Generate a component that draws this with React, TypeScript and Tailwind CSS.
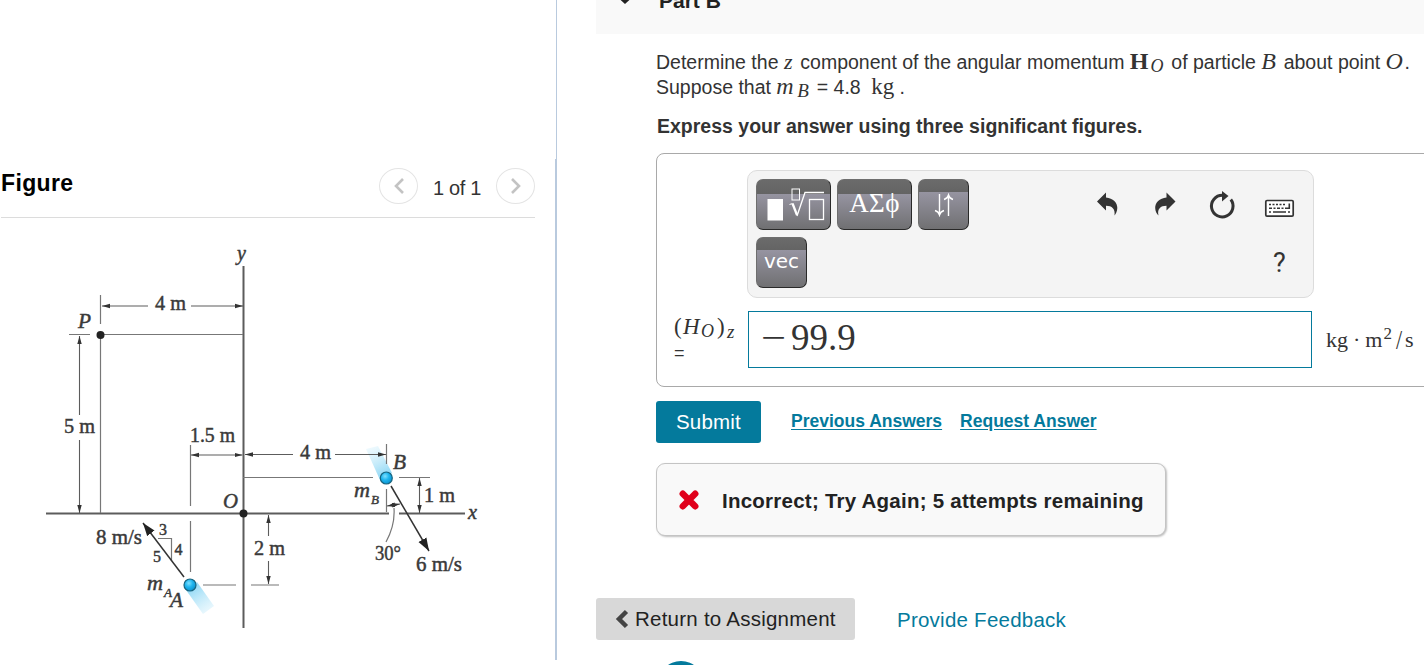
import type { ReactNode } from 'react'

const SERIF = "'Liberation Serif', serif"

type LabelProps = { x: number; y: number; w?: number; size?: number; italic?: boolean; children: string }

const Label = ({ x, y, w, size = 20, italic, children }: LabelProps) => (
  <text
    x={x}
    y={y}
    fontSize={size}
    fontStyle={italic ? 'italic' : 'normal'}
    textLength={w}
    lengthAdjust="spacingAndGlyphs"
    fill="#3a3a3a"
    stroke="#3a3a3a"
    strokeWidth={0.45}
  >
    {children}
  </text>
)

const Diagram = () => (
  <svg className="block h-[447px] w-[555px]" viewBox="0 218 555 447" fontFamily={SERIF}>
    <defs>
      <marker id="tip" viewBox="0 0 8 6" refX="8" refY="3" markerWidth="8" markerHeight="6" markerUnits="userSpaceOnUse" orient="auto-start-reverse">
        <path d="M0 0.8L8 3L0 5.2Z" fill="#333" />
      </marker>
      <marker id="bigTip" viewBox="0 0 13 10" refX="13" refY="5" markerWidth="13" markerHeight="10" markerUnits="userSpaceOnUse" orient="auto">
        <path d="M0 0.4L13 5L0 9.6Z" fill="#222" />
      </marker>
      <radialGradient id="ball" cx="40%" cy="35%" r="65%">
        <stop offset="0" stopColor="#7fe0ff" />
        <stop offset="0.5" stopColor="#1fb5ee" />
        <stop offset="1" stopColor="#0a93d0" />
      </radialGradient>
      <linearGradient id="trailA" gradientUnits="userSpaceOnUse" x1="190" y1="585" x2="210" y2="614">
        <stop offset="0.15" stopColor="#9bdcf6" />
        <stop offset="1" stopColor="#d5f1fc" stopOpacity="0.4" />
      </linearGradient>
      <linearGradient id="trailB" gradientUnits="userSpaceOnUse" x1="386" y1="478" x2="371" y2="447">
        <stop offset="0.15" stopColor="#9bdcf6" />
        <stop offset="1" stopColor="#d5f1fc" stopOpacity="0.4" />
      </linearGradient>
    </defs>

    {/* Motion trails */}
    <path d="M186 590L197 582L214 606L203 614Z" fill="url(#trailA)" />
    <path d="M380 480L392 473L378 446L366 449Z" fill="url(#trailB)" />

    {/* Axes */}
    <g stroke="#5c5c5c" strokeWidth="2">
      <path d="M243.5 266V628" />
      <path d="M46 513.5H389M399 513.5H465" />
    </g>

    {/* Reference lines */}
    <g stroke="#777" strokeWidth="1.2" fill="none">
      <path d="M100.5 295V324M69 334.5H90M100.5 334.5H243M100.5 334V513" />
      <path d="M243 477.5H373M399 477.5H430M386.500 444V464M386.500 489V512" />
      <path d="M190.500 445V506M190.500 521V572M203 585H236M251 585H279" />
      <path d="M158 538.5H171.500V561" />
      <path d="M394 508C395 522 391 533 386 542" />
    </g>

    {/* Dimension arrows */}
    <g stroke="#5c5c5c" strokeWidth="1.1">
      <path d="M148 306H102" markerEnd="url(#tip)" />
      <path d="M191 306H243" markerEnd="url(#tip)" />
      <path d="M79.500 415V336" markerEnd="url(#tip)" />
      <path d="M79.500 440V513" markerEnd="url(#tip)" />
      <path d="M191 455H242.500" markerStart="url(#tip)" markerEnd="url(#tip)" />
      <path d="M293 454.500H245" markerEnd="url(#tip)" />
      <path d="M335 454.500H386" markerEnd="url(#tip)" />
      <path d="M268.500 536V515" markerEnd="url(#tip)" />
      <path d="M268.500 561V584" markerEnd="url(#tip)" />
      <path d="M419.500 478V513" markerStart="url(#tip)" markerEnd="url(#tip)" />
      <path d="M387 506L400 504" markerStart="url(#tip)" markerEnd="url(#tip)" />
    </g>

    {/* Velocity vectors */}
    <g stroke="#333" strokeWidth="1.5">
      <path d="M184 577L143 523" markerEnd="url(#bigTip)" />
      <path d="M391 486L429 551" markerEnd="url(#bigTip)" />
    </g>

    {/* Points and particles */}
    <circle cx="100.500" cy="335" r="4" fill="#222" />
    <circle cx="243.500" cy="513.500" r="4" fill="#222" />
    <circle cx="190" cy="585" r="6" fill="url(#ball)" stroke="#17647f" strokeWidth="1.2" />
    <circle cx="386.300" cy="478" r="6" fill="url(#ball)" stroke="#17647f" strokeWidth="1.2" />

    <Label x={237} y={260} italic>y</Label>
    <Label x={155} y={310} w={31}>4 m</Label>
    <Label x={78} y={328} w={13} italic>P</Label>
    <Label x={64} y={433} w={31}>5 m</Label>
    <Label x={190} y={442} w={45}>1.5 m</Label>
    <Label x={300} y={459} w={31}>4 m</Label>
    <Label x={393} y={469} w={13} italic>B</Label>
    <Label x={223} y={508} w={15} italic>O</Label>
    <Label x={354} y={497} w={16} italic>m</Label>
    <Label x={371} y={504} w={8} size={13} italic>B</Label>
    <Label x={424} y={502} w={31}>1 m</Label>
    <Label x={468} y={519} w={9} italic>x</Label>
    <Label x={96} y={544} w={46}>8 m/s</Label>
    <Label x={159} y={535} size={16}>3</Label>
    <Label x={174.500} y={555} size={16}>4</Label>
    <Label x={153} y={562} size={16}>5</Label>
    <Label x={254} y={555} w={31}>2 m</Label>
    <Label x={375} y={560} w={26}>30°</Label>
    <Label x={416} y={571} w={46}>6 m/s</Label>
    <Label x={147} y={590} w={16} italic>m</Label>
    <Label x={164} y={597} w={8} size={13} italic>A</Label>
    <Label x={170} y={607} w={13} italic>A</Label>
  </svg>
)

const PagerButton = ({ d }: { d: string }) => (
  <button className="flex h-9 w-[39px] items-center justify-center rounded-[50%] border border-[#e4e4e4]">
    <svg width="14" height="18" viewBox="0 0 14 18" fill="none" stroke="#c3c3c3" strokeWidth="2.6">
      <path d={d} />
    </svg>
  </button>
)

const FigurePanel = () => (
  <section className="h-full w-[555px] shrink-0">
    <div className="ml-px flex h-[218px] w-[534px] items-end border-b border-[#dcdcdc]">
      <h2 className="mb-[19px] text-[23px] leading-[30px] font-bold tracking-[0.35px] text-black">Figure</h2>
      <div className="mb-[13px] ml-auto flex items-center">
        <PagerButton d="M11 2L4 9L11 16" />
        <span className="w-[78px] pt-1 text-center text-[20px] tracking-[-0.3px] text-[#333]">1 of 1</span>
        <PagerButton d="M3 2L10 9L3 16" />
      </div>
    </div>
    <Diagram />
  </section>
)

const Math = ({ className = '', children }: { className?: string; children: ReactNode }) => (
  <span className={`inline-block whitespace-nowrap font-['Liberation_Serif',serif] ${className}`}>{children}</span>
)

const ToolButton = ({ className = '', children }: { className?: string; children: ReactNode }) => (
  <button
    className={`flex h-[51px] items-center justify-center rounded-[7px] border border-t-[#6e6e6e] border-r-[#292929] border-b-[#292929] border-l-[#6e6e6e] text-white ${className}`}
  >
    {children}
  </button>
)

const Toolbar = () => (
  <div className="ml-[90px] flex h-[128px] w-[567px] justify-between rounded-[10px] border border-[#dcdcdc] bg-[#f4f4f4] p-2">
    <div className="flex flex-col gap-[7px]">
      <div className="flex gap-1.5">
        <ToolButton className="w-[75px] bg-[linear-gradient(#6b6b6b_0,#646464_14px,#9694a1_14px,#707072_100%)]">
          <svg width="73" height="49" viewBox="0 0 73 49" fill="none" stroke="#fff">
            <rect x="10.500" y="19" width="15.500" height="21.500" fill="#fff" stroke="none" />
            <rect x="35" y="9" width="7.500" height="11" />
            <path d="M32.500 24.500L35.500 23.500" />
            <path d="M35.500 23.500L40 35" strokeWidth="2.300" />
            <path d="M40 36L48 12.500H67" strokeWidth="1.300" />
            <rect x="52.500" y="19.500" width="14" height="20" strokeWidth="1.300" />
          </svg>
        </ToolButton>
        <ToolButton className="w-[75px] bg-[linear-gradient(#6b6b6b_0,#646464_14px,#9694a1_14px,#707072_100%)]">
          <span className="pb-[3px] font-['Liberation_Serif',serif] text-[27px] leading-none tracking-[0.4px]">ΑΣϕ</span>
        </ToolButton>
        <ToolButton className="w-[51px] bg-[linear-gradient(#6b6b6b_0,#646464_12px,#9694a1_12px,#707072_100%)]">
          <svg width="20" height="24" viewBox="0 0 20 24" fill="none" stroke="#fff" strokeWidth="1.400">
            <path d="M5.500 1V22M1 17.500Q4.500 18.500 5.500 22Q6.500 18.500 10 17.500M14.500 23V2M10 6.500Q13.500 5.500 14.500 2Q15.500 5.500 19 6.500" />
          </svg>
        </ToolButton>
      </div>
      <ToolButton className="w-[51px] bg-[linear-gradient(#6b6b6b_0,#646464_12px,#9694a1_12px,#707072_100%)]">
        <span className="pb-[3px] font-['DejaVu_Sans',sans-serif] text-[20px] leading-none">vec</span>
      </ToolButton>
    </div>
    <svg width="210" height="110" viewBox="1095 179 210 110" fill="#333">
      <path d="M1097 201.500L1106 192.500V197.500C1113 198 1117.500 203 1117.300 208C1117.200 211 1116 214 1114.500 215.500C1115.500 209 1112 205.800 1106 205.800V210.500Z" />
      <path d="M1175.500 201.500L1166.500 192.500V197.500C1159.500 198 1155 203 1155.200 208C1155.300 211 1156.500 214 1158.500 215.500C1157 209 1160.500 205.800 1166.500 205.800V210.500Z" />
      <path d="M1222.500 195.300A10.800 10.800 0 1 0 1230.800 199.500" fill="none" stroke="#333" strokeWidth="3" />
      <path d="M1222 191L1228.500 196L1222 201.500Z" />
      <rect x="1265.800" y="200.500" width="27.400" height="15.700" rx="1.200" fill="#fff" stroke="#333" strokeWidth="1.700" />
      <g stroke="#333" strokeWidth="1.600">
        <path d="M1269 204.500H1286" strokeDasharray="2 1.500" />
        <path d="M1269 208.300H1286" strokeDasharray="3 1.500 2 1.500" />
        <path d="M1289.300 203.500V209M1286 208.300H1290M1269 212H1271M1273 212H1286M1288 212H1290" />
      </g>
      <text x="1273" y="272" fontSize="27" fontFamily="Roboto, sans-serif">?</text>
    </svg>
  </div>
)

const AnswerBox = () => (
  <div className="mt-[14px] h-[234px] w-[800px] rounded-lg border border-[#a9a9a9] pt-4">
    <Toolbar />
    <div className="mt-[13px] flex">
      <div className="w-[91px] pl-[17px] text-[#333]">
        <Math className="mt-[1px] text-[23px] leading-[30px]">
          <span className="inline-block w-[9px]">(</span>
          <i className="inline-block w-[18px]">H</i>
          <i className="inline-block w-[16px] translate-y-[3px] text-[18px]">O</i>
          <span className="inline-block w-[10px]">)</span>
          <i className="inline-block translate-y-[4px] text-[19px]">z</i>
        </Math>
        <div className="text-[18px] leading-5">=</div>
      </div>
      <div className="h-[57px] w-[564px] border border-[#047a9c] pl-3 font-['Liberation_Serif',serif] text-[37px] leading-[52px] text-[#333]">
        <span className="inline-block w-[30px]">
          <span className="inline-block origin-left scale-x-[1.2]">−</span>
        </span>
        99.9
      </div>
      <Math className="ml-[14px] pt-[13px] text-[22px] leading-8 text-[#333]">
        kg<span className="mx-[5px]">·</span>m
        <span className="ml-px inline-block -translate-y-2 text-[17px]">2</span>
        <span className="ml-[4px] inline-block scale-y-125">/</span>
        <span className="ml-[3px]">s</span>
      </Math>
    </div>
  </div>
)

const PartB = () => (
  <section className="w-[828px] shrink-0 text-[#333]">
    <header className="flex h-[34px] items-start overflow-hidden bg-[#f9f9f9]">
      <svg className="ml-[23px]" width="12" height="6" viewBox="0 0 12 6" fill="none" stroke="#222" strokeWidth="3">
        <path d="M0 -3.500L6 2L12 -3.500" />
      </svg>
      <h2 className="-mt-[9px] ml-[28px] text-[21px] leading-5 font-bold text-[#222]">Part B</h2>
    </header>

    <div className="ml-[60px]">
      <div className="pt-[15px] text-[19.500px] whitespace-nowrap">
        <p className="h-[25px] leading-[25px]">
          Determine the <Math className="w-[11px] text-[22px] leading-none italic">z</Math> component of the angular momentum{' '}
          <Math className="w-[36px] text-[24px] leading-none">
            <b>H</b>
            <i className="ml-[2px] inline-block translate-y-[3px] text-[18px]">O</i>
          </Math>{' '}
          of particle <Math className="w-[17px] text-[24px] leading-none italic">B</Math> about point{' '}
          <Math className="w-[19px] text-[24px] leading-none italic">O</Math>.
        </p>
        <p className="h-[25px] leading-[25px]">
          Suppose that{' '}
          <Math className="w-[35px] text-[24px] leading-none italic">
            <span className="inline-block w-[21px]">m</span>
            <span className="inline-block translate-y-[3px] text-[19px]">B</span>
          </Math>{' '}
          = 4.8 <Math className="ml-[5px] text-[23px] leading-none">kg</Math> .
        </p>
      </div>
      <p className="mt-[15px] pl-px text-[19.500px] leading-[25px] font-bold">Express your answer using three significant figures.</p>

      <AnswerBox />

      <div className="mt-[14px] flex h-[42px] items-center text-[17.500px] font-bold text-[#047a9c]">
        <button className="h-[42px] w-[105px] rounded-[3px] bg-[#047a9c] text-[20.500px] font-normal tracking-[0.2px] text-white">Submit</button>
        <a className="mb-[2px] ml-[30px] underline underline-offset-2">Previous Answers</a>
        <a className="mb-[2px] ml-[18px] underline underline-offset-2">Request Answer</a>
      </div>

      <div className="mt-5 flex h-[73px] w-[510px] items-center rounded-[9px] border border-[#c4c4c4] bg-[#f9f9f9] pl-[22px] shadow-[1px_1px_2px_rgba(0,0,0,0.25)]">
        <svg width="20" height="20" viewBox="0 0 20 20" stroke="#e0001b" strokeWidth="6.500" strokeLinecap="round">
          <path d="M3.800 3.800L16.200 16.200M16.200 3.800L3.800 16.200" />
        </svg>
        <span className="ml-[23px] pt-1 text-[20.500px] font-bold tracking-[0.240px] whitespace-nowrap text-[#222]">
          Incorrect; Try Again; 5 attempts remaining
        </span>
      </div>
    </div>

    <footer className="mt-[62px] flex h-[42px] items-center text-[20.500px] tracking-[0.240px]">
      <button className="flex h-[42px] w-[259px] items-center rounded-[3px] bg-[#d8d8d8] pl-[19px] text-[#222]">
        <svg width="14" height="20" viewBox="0 0 14 20" fill="none" stroke="#444" strokeWidth="4.500">
          <path d="M11.500 2.500L4 10L11.500 17.500" />
        </svg>
        <span className="ml-1.5 whitespace-nowrap">Return to Assignment</span>
      </button>
      <a className="ml-[42px] pt-0.5 whitespace-nowrap text-[#047a9c]">Provide Feedback</a>
    </footer>
    <div className="mt-[21px] ml-[62px] h-[46px] w-[46px] rounded-full bg-[#047a9c]" />
  </section>
)

const App = () => (
  <main className="flex h-[665px] w-[1424px] overflow-hidden bg-white font-['Liberation_Sans',Arial,sans-serif]">
    <FigurePanel />
    {/* Pane divider */}
    <div className="mr-[39px] flex w-[2px] shrink-0 flex-col items-end">
      <div className="h-[159px] w-px bg-[#b9cade]" />
      <div className="h-[501px] w-[2px] bg-[#b9cade]" />
    </div>
    <PartB />
  </main>
)

export default App
